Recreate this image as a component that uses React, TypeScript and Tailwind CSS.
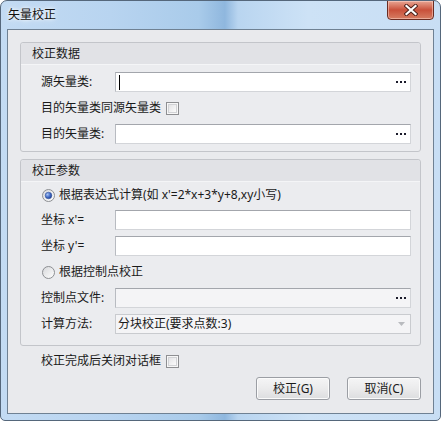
import React from "react";

const font = { fontFamily: '"Noto Sans", "Noto Sans CJK SC", sans-serif' };

function Dots() {
  return (
    <div className="flex gap-[2px] mr-[4px]">
      <div className="w-[2px] h-[2px] bg-[#1b1b2b]" />
      <div className="w-[2px] h-[2px] bg-[#1b1b2b]" />
      <div className="w-[2px] h-[2px] bg-[#1b1b2b]" />
    </div>
  );
}

function Input({
  children,
  disabled,
  dots,
  caret,
}: {
  children?: React.ReactNode;
  disabled?: boolean;
  dots?: boolean;
  caret?: boolean;
}) {
  return (
    <div
      className={`flex-1 h-[20px] flex items-center border border-t-[#a3a6ac] border-l-[#b8bbc1] border-r-[#d3d5d9] border-b-[#d3d5d9] ${
        disabled ? "bg-[#f4f4f6]" : "bg-white"
      }`}
    >
      <div className="flex-1 flex items-center pl-[2px] h-full">
        {caret && <div className="w-[1px] h-[15px] bg-black ml-[1px]" />}
        {children}
      </div>
      {dots && <Dots />}
    </div>
  );
}

function Checkbox() {
  return (
    <div className="w-[13px] h-[13px] border border-[#8e8f92] bg-[#f7f7f7] p-[1px]">
      <div className="w-full h-full border border-[#d2d3d6] bg-gradient-to-br from-[#e4e4e6] to-[#fbfbfb]" />
    </div>
  );
}

function Radio({ checked }: { checked?: boolean }) {
  return (
    <svg width="13" height="13" viewBox="0 0 13 13">
      <defs>
        <linearGradient id={checked ? "rbg1" : "rbg2"} x1="0" y1="0" x2="1" y2="1">
          <stop offset="0" stopColor="#d6d7da" />
          <stop offset="1" stopColor="#ffffff" />
        </linearGradient>
        <radialGradient id="rdot" cx="0.35" cy="0.35" r="0.7">
          <stop offset="0" stopColor="#a8c4f4" />
          <stop offset="0.6" stopColor="#3f68c4" />
          <stop offset="1" stopColor="#1f3e8c" />
        </radialGradient>
      </defs>
      <circle cx="6.5" cy="6.5" r="6" fill={`url(#${checked ? "rbg1" : "rbg2"})`} stroke="#8c8e92" strokeWidth="1" />
      {checked && <circle cx="6.5" cy="6.5" r="3.3" fill="url(#rdot)" stroke="#37579d" strokeWidth="0.6" />}
    </svg>
  );
}

function Row({ label, children }: { label: string; children?: React.ReactNode }) {
  return (
    <div className="flex items-center h-[20px]">
      <div className="w-[74px] leading-[20px]">{label}</div>
      {children}
    </div>
  );
}

function GroupHeader({ title }: { title: string }) {
  return (
    <div className="h-[22px] bg-[#e1e2e6] border-b border-b-[#f4f5f7] pl-[11px] leading-[21px] rounded-t-[3px]">
      {title}
    </div>
  );
}

function Button({ children }: { children: React.ReactNode }) {
  return (
    <div className="w-[74px] h-[23px] border border-[#9b9ea4] rounded-[3px] bg-gradient-to-b from-[#f5f5f6] via-[#ebebec] to-[#dcdddf] flex items-center justify-center leading-[20px] shadow-[inset_0_0_0_1px_#fbfbfb]">
      {children}
    </div>
  );
}

export default function App() {
  return (
    <div
      className="w-[441px] h-[421px] relative overflow-hidden rounded-t-[7px] rounded-b-[5px] border border-[#55677b] text-[12px] text-[#1a1a1a]"
      style={{
        ...font,
        background:
          "linear-gradient(to right, #c3dbf3 0%, #b8d4f0 25%, #a9cbea 45%, #8fb7de 51%, #b9d5f0 54%, #cde2f6 70%, #c8def4 100%)",
      }}
    >
      <div className="h-[28px] flex items-center pl-[7px] relative">
        <span className="text-[12px] leading-[16px] text-[#111] [text-shadow:0_0_6px_#ffffff,0_0_3px_#ffffff]">
          矢量校正
        </span>
        <div className="absolute right-[6px] top-[-1px] w-[47px] h-[20px] rounded-b-[4px] border border-[#6a2c22] bg-gradient-to-b from-[#e7a593] via-[#c9503a] to-[#d67c62] flex items-center justify-center shadow-[inset_0_0_0_1px_rgba(255,220,210,0.5)]">
          <svg width="14" height="12" viewBox="0 0 14 12">
            <path d="M2.5 2 L11.5 10 M11.5 2 L2.5 10" stroke="#4b2019" strokeWidth="4" strokeLinecap="square" />
            <path d="M2.5 2 L11.5 10 M11.5 2 L2.5 10" stroke="#ffffff" strokeWidth="2.2" strokeLinecap="square" />
          </svg>
        </div>
      </div>
      <div className="mx-[6px] h-[385px] border border-[#6f8193] bg-[#e9eaed] pt-[12px] pl-[12px] pr-[13px]">
        <div className="w-[401px] border border-[#c3c5ca] rounded-[3px] bg-[#ebecef]">
          <GroupHeader title="校正数据" />
          <div className="pl-[20px] pr-[9px] pt-[7px] pb-[7px] flex flex-col gap-[6px]">
            <Row label="源矢量类:">
              <Input dots caret />
            </Row>
            <div className="flex items-center h-[20px] gap-[5px]">
              <span className="leading-[20px]">目的矢量类同源矢量类</span>
              <Checkbox />
            </div>
            <Row label="目的矢量类:">
              <Input dots />
            </Row>
          </div>
        </div>

        <div className="w-[401px] mt-[7px] border border-[#c3c5ca] rounded-[3px] bg-[#ebecef]">
          <GroupHeader title="校正参数" />
          <div className="pl-[20px] pr-[9px] pt-[3px] pb-[11px] flex flex-col">
            <div className="flex items-center h-[20px] gap-[4px] ml-[1px]">
              <Radio checked />
              <span className="leading-[20px]">根据表达式计算(如 x'=2*x+3*y+8,xy小写)</span>
            </div>
            <div className="mt-[5px]">
              <Row label="坐标 x'=">
                <Input />
              </Row>
            </div>
            <div className="mt-[6px]">
              <Row label="坐标 y'=">
                <Input />
              </Row>
            </div>
            <div className="flex items-center h-[20px] gap-[4px] ml-[1px] mt-[6px]">
              <Radio />
              <span className="leading-[20px]">根据控制点校正</span>
            </div>
            <div className="mt-[6px]">
              <Row label="控制点文件:">
                <Input disabled dots />
              </Row>
            </div>
            <div className="mt-[6px]">
              <Row label="计算方法:">
                <div className="flex-1 h-[20px] flex items-center border border-[#c9cbcf] bg-[#f4f4f6]">
                  <span className="flex-1 pl-[2px] leading-[18px]">分块校正(要求点数:3)</span>
                  <svg width="7" height="4" viewBox="0 0 7 4" className="mr-[5px]">
                    <path d="M0 0 L7 0 L3.5 4 Z" fill="#b9bbbf" />
                  </svg>
                </div>
              </Row>
            </div>
          </div>
        </div>

        <div className="flex items-center h-[20px] gap-[5px] mt-[5px] pl-[21px]">
          <span className="leading-[20px]">校正完成后关闭对话框</span>
          <Checkbox />
        </div>

        <div className="flex justify-end gap-[17px] mt-[6px] w-[401px]">
          <Button>校正(G)</Button>
          <Button>取消(C)</Button>
        </div>
      </div>
    </div>
  );
}
